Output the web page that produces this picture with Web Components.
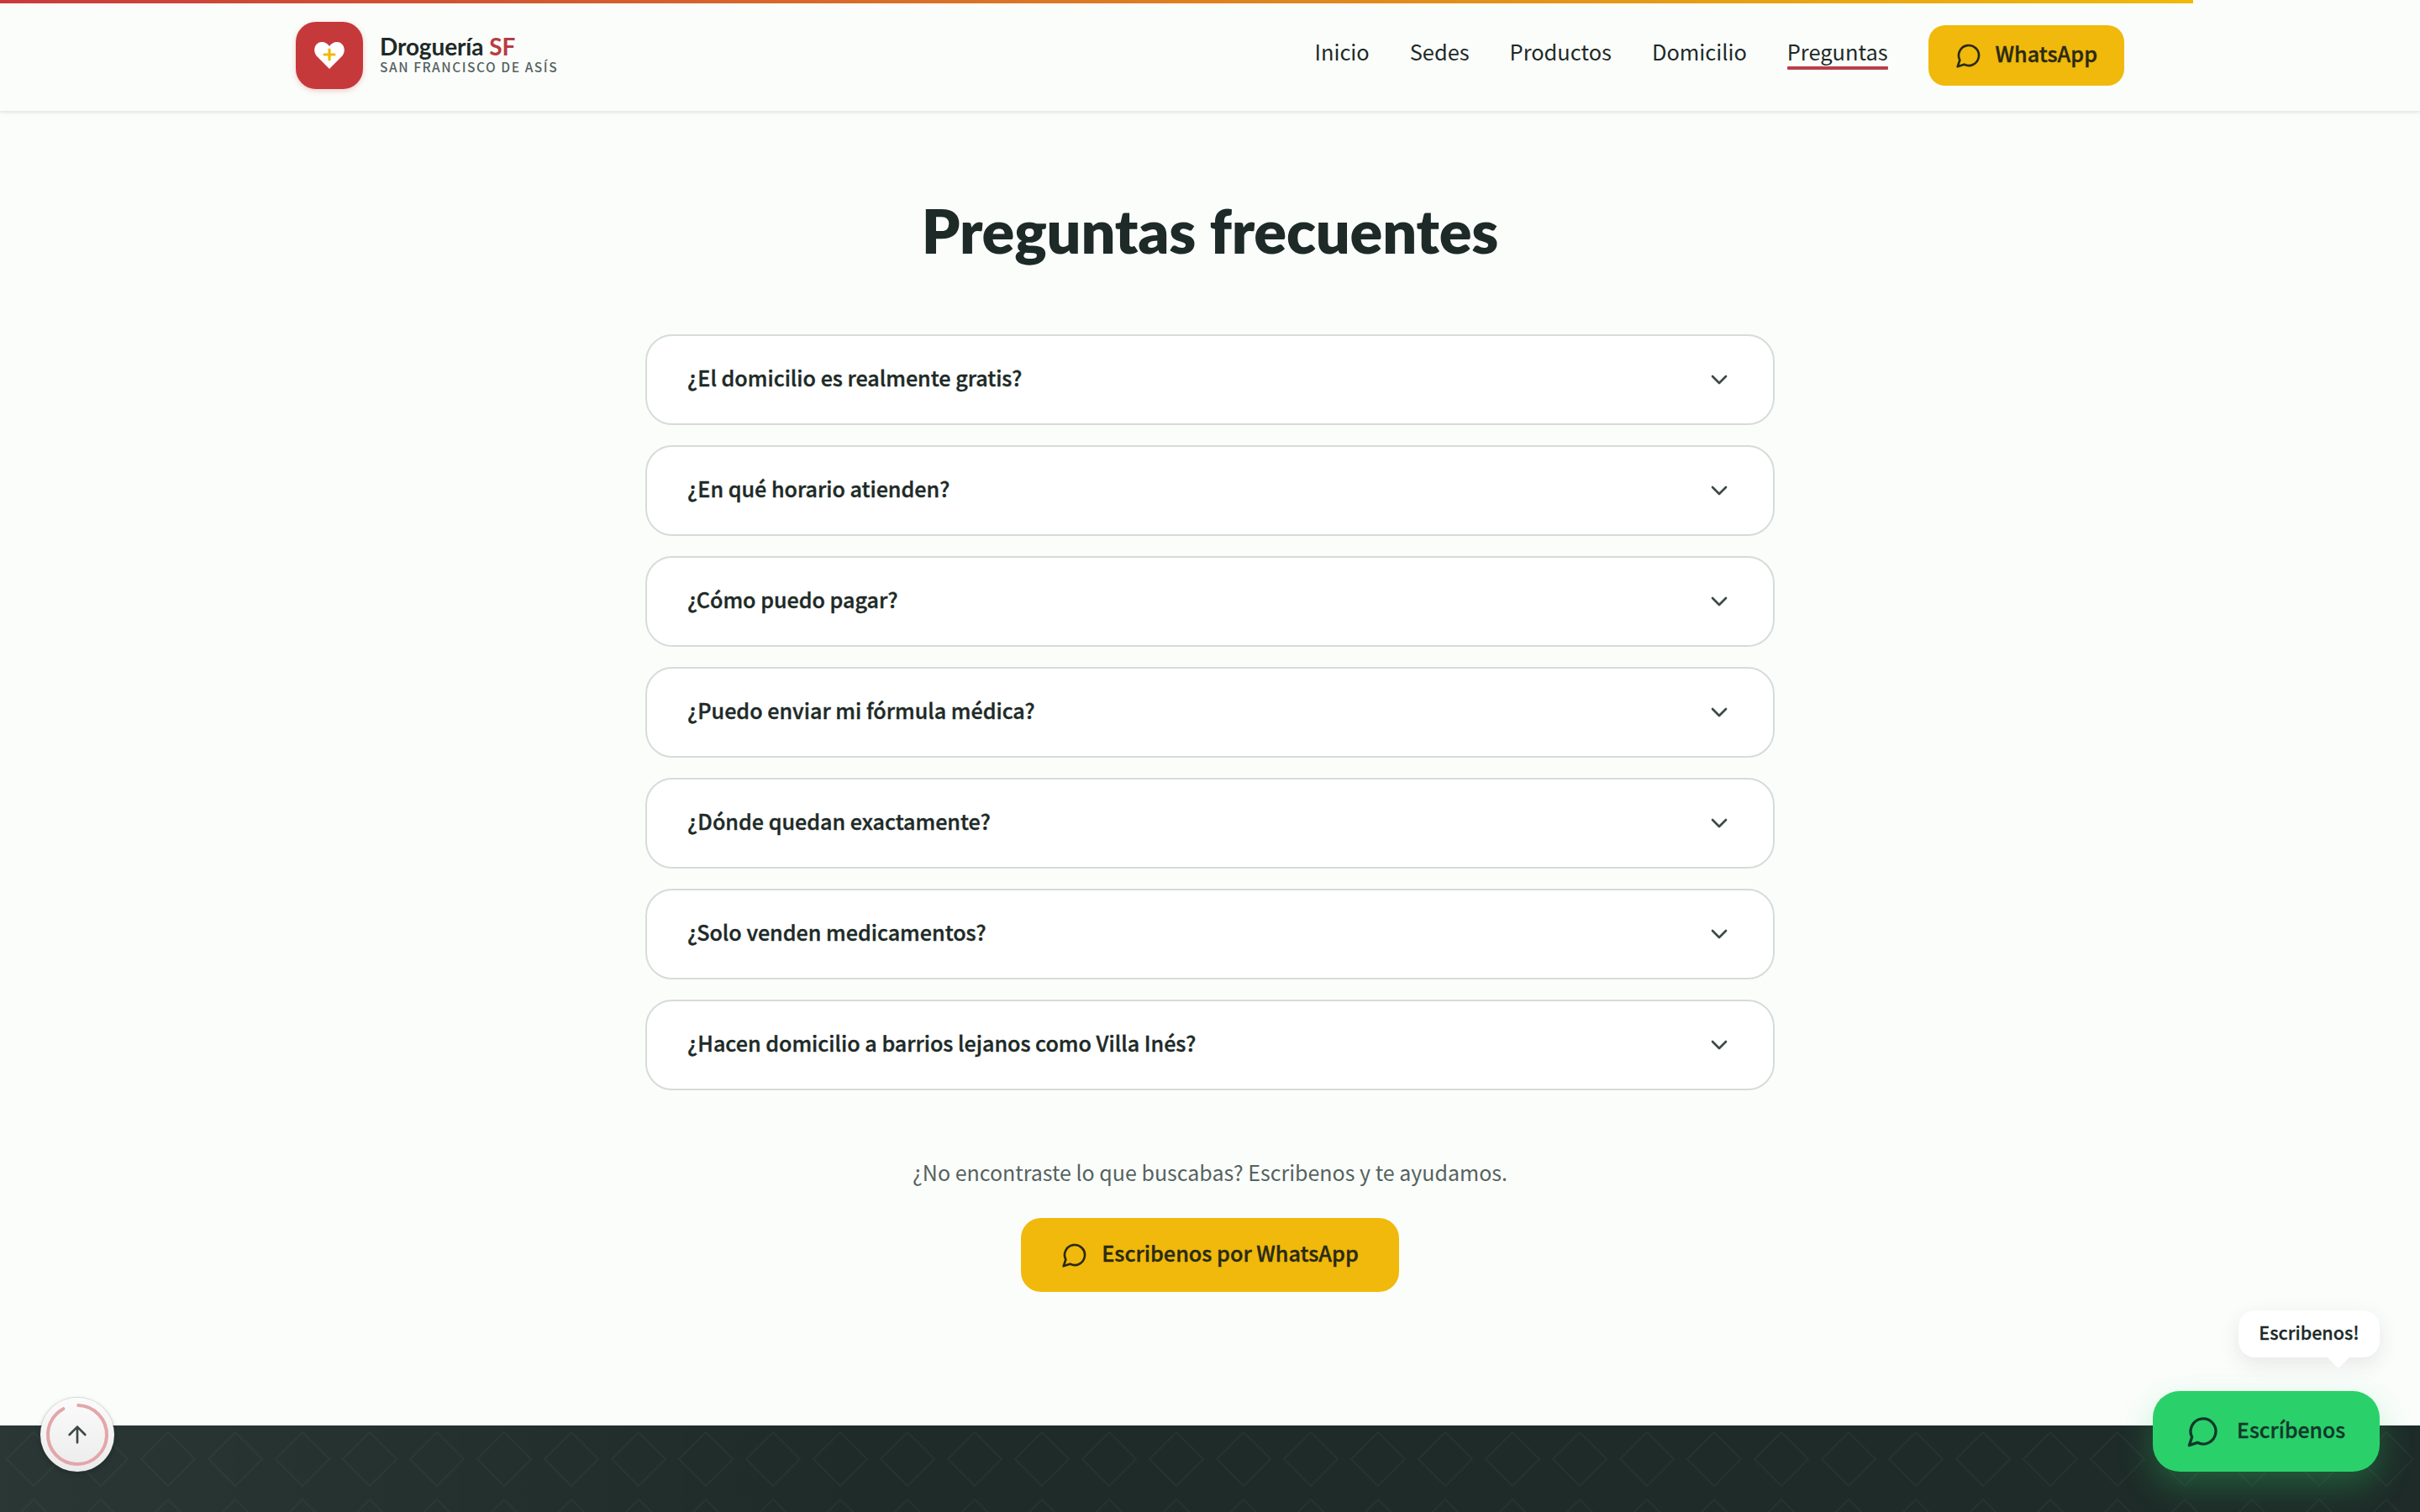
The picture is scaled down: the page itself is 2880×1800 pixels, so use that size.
<!doctype html>
<html lang="es"><head><meta charset="utf-8"><title>Droguería SF</title>
<style>
html,body{margin:0;padding:0}
body{width:2880px;height:1800px;overflow:hidden;background:#fbfdfb;font-family:"Noto Sans CJK SC","Noto Sans",sans-serif;color:#1d2a27;position:relative}
</style></head><body>
<site-header></site-header>
<faq-section></faq-section>
<site-footer></site-footer>
<scroll-top></scroll-top>
<chat-fab></chat-fab>
<script>
const chat=(s,w=2)=>`<svg width="${s}" height="${s}" viewBox="0 0 24 24" fill="none" stroke="currentColor" stroke-width="${w}" stroke-linecap="round" stroke-linejoin="round" aria-hidden="true"><path d="M7.9 20A9 9 0 1 0 4 16.1L2 22Z"/></svg>`;
class Base extends HTMLElement{
  constructor(){super();this.attachShadow({mode:'open'}).innerHTML=this.render()}
}
customElements.define('wa-button',class extends Base{render(){return `<style>
:host{display:inline-flex}
a{display:inline-flex;align-items:center;gap:16px;height:var(--h,72px);padding:0 var(--px,32px);background:#f0b90b;border-radius:var(--r,20px);color:#2a2a14;font-weight:500;-webkit-text-stroke:.4px currentColor;font-size:25.2px;line-height:1;text-decoration:none;white-space:nowrap}
span{position:relative;top:-2px}
svg{display:block;-webkit-text-stroke:0}
</style><a>${chat(32)}<span><slot></slot></span></a>`}});
customElements.define('site-header',class extends Base{render(){return `<style>
:host{display:block;height:132px;background:#fbfdfb;box-shadow:0 2px 4px rgba(30,50,45,.12);position:relative;box-sizing:border-box}
.bar{position:absolute;left:0;top:0;height:4px;width:2610px;background:linear-gradient(90deg,#c93a3c,#f0b90b)}
.in{height:132px;box-sizing:border-box;padding:0 352px;display:flex;align-items:center;justify-content:space-between}
.brand{display:flex;align-items:center;gap:20px}
.logo{width:80px;height:80px;border-radius:24px;background:#c5393b;display:flex;align-items:center;justify-content:center;box-shadow:0 2px 6px rgba(199,58,60,.25)}
.t{display:flex;flex-direction:column;margin-top:-3px}
.n{font:700 28px/29px "Lato","Noto Sans",sans-serif;color:#1d2a27;letter-spacing:-.1px}
.n b{color:#b93b41;font-weight:700}
.s{font-size:15.5px;line-height:18px;font-weight:500;letter-spacing:1.55px;color:#55635f}
nav{display:flex;align-items:center;gap:48px}
nav a{font-size:25.4px;line-height:40px;font-weight:400;color:#1d2a27;text-decoration:none;position:relative;top:-5px}
nav a.on::after{content:"";position:absolute;left:0;right:0;bottom:-2px;height:4px;background:#b8404a;border-radius:1px}
</style><div class="bar"></div><div class="in">
<div class="brand"><div class="logo"><svg width="40" height="40" viewBox="0 0 40 40" aria-hidden="true"><path d="M20 36 L4.600 20.400 C-.5 14 3 4 11 4 C15 4 18 6 20 9 C22 6 25 4 29 4 C37 4 40.500 14 35.400 20.400 Z" fill="#fff"/><path d="M20 13v12M14 19h12" stroke="#f0b90b" stroke-width="3.200" stroke-linecap="round"/></svg></div>
<div class="t"><div class="n">Droguería <b>SF</b></div><div class="s">SAN FRANCISCO DE ASÍS</div></div></div>
<nav><a>Inicio</a><a>Sedes</a><a>Productos</a><a>Domicilio</a><a class="on">Preguntas</a><wa-button>WhatsApp</wa-button></nav>
</div>`}});
customElements.define('faq-item',class extends Base{render(){return `<style>
:host{display:flex;align-items:center;justify-content:space-between;height:108px;box-sizing:border-box;padding:0 48px;background:#fff;border:2px solid #d5dcda;border-radius:32px;font-size:25.1px;font-weight:500;-webkit-text-stroke:.4px currentColor;color:#1d2a27}
span{position:relative;top:-3px}
svg{display:block;color:#3d4a47;-webkit-text-stroke:0}
</style><span><slot></slot></span><svg width="32" height="32" viewBox="0 0 24 24" fill="none" stroke="currentColor" stroke-width="2" stroke-linecap="round" stroke-linejoin="round" aria-hidden="true"><path d="m6 9 6 6 6-6"/></svg>`}});
customElements.define('faq-section',class extends Base{render(){return `<style>
:host{display:block;height:1565px;box-sizing:border-box;padding-top:94px}
h2{margin:0;text-align:center;font:800 72px/96px "Lato","Noto Sans",sans-serif;letter-spacing:-.2px;color:#1d2a27}
.list{width:1344px;margin:76px auto 0;display:flex;flex-direction:column;gap:24px}
p{margin:77px 0 0;text-align:center;font-size:25px;line-height:40px;color:#55635f}
.cta{display:flex;justify-content:center;margin-top:35px}
wa-button{--h:88px;--px:48px;--r:24px}
</style><h2>Preguntas frecuentes</h2><div class="list">
<faq-item>¿El domicilio es realmente gratis?</faq-item>
<faq-item>¿En qué horario atienden?</faq-item>
<faq-item>¿Cómo puedo pagar?</faq-item>
<faq-item>¿Puedo enviar mi fórmula médica?</faq-item>
<faq-item>¿Dónde quedan exactamente?</faq-item>
<faq-item>¿Solo venden medicamentos?</faq-item>
<faq-item>¿Hacen domicilio a barrios lejanos como Villa Inés?</faq-item>
</div><p>¿No encontraste lo que buscabas? Escribenos y te ayudamos.</p>
<div class="cta"><wa-button>Escribenos por WhatsApp</wa-button></div>`}});
customElements.define('site-footer',class extends Base{render(){return `<style>
:host{display:block;height:103px;background-color:#1e2b28;background-image:url("data:image/svg+xml,%3Csvg xmlns='http://www.w3.org/2000/svg' width='80' height='80'%3E%3Cpath d='M40 8 72 40 40 72 8 40Z' fill='none' stroke='%23fff' stroke-opacity='.03' stroke-width='2'/%3E%3C/svg%3E"),linear-gradient(90deg,rgba(255,255,255,.055),rgba(255,255,255,0) 36%);background-size:80px 80px,100% 100%}
</style>`}});
customElements.define('scroll-top',class extends Base{render(){return `<style>
:host{position:absolute;left:48px;top:1664px;width:88px;height:88px;border-radius:50%;background:linear-gradient(#fbfbfb,#ebebec);box-shadow:0 0 0 1px rgba(60,80,75,.15),0 2px 6px rgba(0,0,0,.2);display:flex;align-items:center;justify-content:center;color:#3d4a47}
.ring{position:absolute;inset:0}
</style><svg class="ring" width="88" height="88" viewBox="0 0 88 88" aria-hidden="true"><circle cx="44" cy="44" r="35" fill="none" stroke="#e3a6a8" stroke-width="4" stroke-linecap="round" stroke-dasharray="201 220" transform="rotate(-88 44 44)"/></svg>
<svg width="32" height="32" viewBox="0 0 24 24" fill="none" stroke="currentColor" stroke-width="2" stroke-linecap="round" stroke-linejoin="round" aria-hidden="true"><path d="m5 12 7-7 7 7M12 19V5"/></svg>`}});
customElements.define('chat-fab',class extends Base{render(){return `<style>
:host{position:absolute;right:48px;top:1560px;display:flex;flex-direction:column;align-items:flex-end;gap:40px}
.tip{position:relative;height:56px;width:168px;box-sizing:border-box;background:#fff;border-radius:20px;display:flex;align-items:center;justify-content:center;font-size:21.5px;font-weight:500;-webkit-text-stroke:.3px currentColor;color:#1d2a27;box-shadow:0 8px 24px rgba(30,50,45,.1)}
.tip span{position:relative;top:-3px}
.tip::after{content:"";position:absolute;left:109px;bottom:-9px;width:20px;height:20px;background:#fff;transform:rotate(45deg);border-radius:3px}
.btn{display:flex;align-items:center;gap:20px;width:270px;height:96px;box-sizing:border-box;padding-left:40px;border-radius:32px;background:#2ad16b;color:#12382a;font-size:24.8px;font-weight:500;-webkit-text-stroke:.3px currentColor;box-shadow:0 16px 40px rgba(42,209,107,.3)}
.btn span{position:relative;top:-3px}
svg{display:block;-webkit-text-stroke:0}
</style><div class="tip"><span>Escribenos!</span></div><div class="btn">${chat(40)}<span>Escríbenos</span></div>`}});
</script></body></html>
